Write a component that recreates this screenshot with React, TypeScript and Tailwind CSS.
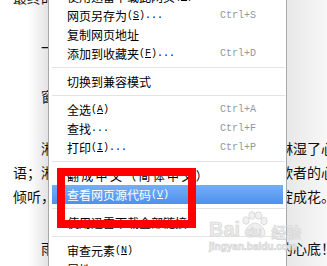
type Entry =
  | "sep"
  | { label: string; accel?: string; dots?: boolean; shortcut?: string; active?: boolean; wide?: boolean }

const entries: Entry[] = [
  { label: "使用迅雷下载此网页", accel: "C" },
  { label: "网页另存为", accel: "S", dots: true, shortcut: "Ctrl+S" },
  { label: "复制网页地址" },
  { label: "添加到收藏夹", accel: "F", dots: true, shortcut: "Ctrl+D" },
  "sep",
  { label: "切换到兼容模式" },
  "sep",
  { label: "全选", accel: "A", shortcut: "Ctrl+A" },
  { label: "查找", dots: true, shortcut: "Ctrl+F" },
  { label: "打印", accel: "I", dots: true, shortcut: "Ctrl+P" },
  "sep",
  { label: "翻成中文（简体中文）", wide: true },
  { label: "查看网页源代码", accel: "V", active: true },
  "sep",
  { label: "使用迅雷下载全部链接" },
  "sep",
  { label: "审查元素", accel: "N" },
  { label: "属性" },
]

function MenuRow({ e }: { e: Entry }) {
  if (e === "sep") {
    return (
      <div className="h-[9px] flex items-center pl-[3px] pr-[1px]">
        <div className="h-px w-full bg-[#e3e3e3]" />
      </div>
    )
  }
  return (
    <div
      className={
        e.active
          ? "h-[19px] mx-[3px] flex items-center pl-[15px] text-white bg-gradient-to-b from-[#74aef6] to-[#4e91ec]"
          : "h-[19px] mx-[3px] flex items-center pl-[15px] text-black"
      }
    >
      <span className="flex-1 flex items-center whitespace-nowrap">
        <span className={e.wide ? "tracking-[2.3px]" : ""}>{e.label}</span>
        {(e.accel || e.dots) && (
          <span className="font-['Liberation_Mono',monospace] text-[10px]">
            {e.accel && (
              <>
                (<span className="underline">{e.accel}</span>)
              </>
            )}
            {e.dots && "..."}
          </span>
        )}
      </span>
      {e.shortcut && (
        <span className="w-[63px] font-['Liberation_Mono',monospace] text-[10px] text-[#8c97a3]">
          {e.shortcut}
        </span>
      )}
    </div>
  )
}

function Watermark() {
  return (
    <div className="absolute left-[209px] top-[211px] flex flex-col text-[#ebebeb] [-webkit-text-stroke:0.6px_#d4d4d4] pointer-events-none">
      <div className="flex items-end h-[28px]">
        <span className="font-['Liberation_Sans',sans-serif] font-bold text-[20px] leading-none">Bai</span>
        <span className="relative w-[30px] h-[28px]">
          <svg viewBox="0 0 30 28" className="absolute inset-0 w-[30px] h-[28px]" fill="#f0f0f0" stroke="#d4d4d4" strokeWidth="0.8">
            <ellipse cx="6" cy="9.5" rx="3.2" ry="3.8" />
            <ellipse cx="12" cy="4.5" rx="3.2" ry="3.8" />
            <ellipse cx="18.5" cy="4.5" rx="3.2" ry="3.8" />
            <ellipse cx="24" cy="10" rx="3.2" ry="3.8" />
            <path d="M15 12c-4.5 0-10 6-10 10 0 3 3 5 6.5 4 1.5-.5 5.5-.5 7 0 3.5 1 6.5-1 6.5-4 0-4-5.5-10-10-10z" />
          </svg>
          <span className="absolute left-[6px] bottom-[1px] font-['Liberation_Sans',sans-serif] font-bold text-[13px] leading-none">du</span>
        </span>
        <span className="ml-[1px] font-['Noto_Sans_CJK_SC',sans-serif] font-bold text-[15px] leading-none">经验</span>
      </div>
      <span className="mt-[3px] font-['Liberation_Sans',sans-serif] font-bold text-[10px] leading-none">jingyan.baidu.com</span>
    </div>
  )
}

export default function App() {
  return (
    <div className="relative w-[327px] h-[266px] overflow-hidden bg-white">
      {/* page text behind the menu */}
      <div className="-mt-[15px] pl-[13px] font-['Noto_Sans_CJK_SC',sans-serif] text-[14px] leading-[24px] text-[#111] whitespace-nowrap">
        <div>最终的答案，藏在雨里。</div>
        <div className="mt-[26px] indent-7">一场春雨，一份心情。</div>
        <div className="mt-[25px] indent-7">窗外，雨丝如织。</div>
        <div className="mt-[28px]">
          <div className="indent-7">淅沥沥的雨落在屋檐上，滴答滴答，也淋湿了心</div>
          <div>语；淅淅沥沥，是天空写给大地的诗，唱给歌者的心</div>
          <div>倾听，那些落下的雨滴在心田里慢慢晕开，绽成花。</div>
        </div>
        <div className="mt-[28px] indent-7">雨停了，那一份清凉却久久地留在了我的心底！</div>
      </div>

      {/* context menu */}
      <div className="absolute left-[28px] top-[-13px] w-[299px] h-[290px] flex">
        <div className="w-[20px] bg-gradient-to-r from-transparent to-[rgba(0,0,0,0.11)]" />
        <div className="w-[239px] bg-white border-x border-[#a9a9a9] font-['Noto_Sans_CJK_SC',sans-serif] text-[12px] leading-none">
          {entries.map((e, i) => (
            <MenuRow key={i} e={e} />
          ))}
        </div>
        <div className="w-[40px] bg-gradient-to-r from-[rgba(0,0,0,0.09)] to-[rgba(0,0,0,0.03)]" />
      </div>

      {/* red annotation box */}
      <div className="absolute left-[57px] top-[168px] w-[139px] h-[60px] border-[8px] border-[#ff0000]" />

      <Watermark />
    </div>
  )
}
